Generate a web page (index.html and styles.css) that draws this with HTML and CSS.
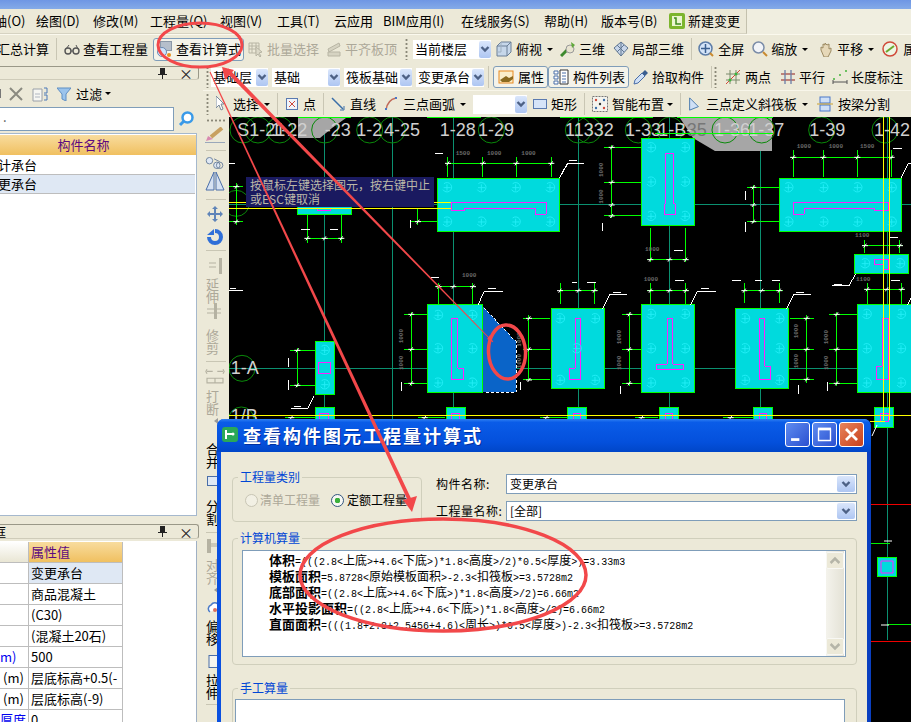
FILE: index.html
```html
<!DOCTYPE html>
<html lang="zh">
<head>
<meta charset="utf-8">
<title>查看构件图元工程量计算式</title>
<link rel="stylesheet" href="styles.css">
</head>
<body>
<svg class="defs" width="0" height="0">
  <symbol id="chev" viewBox="0 0 12 16"><path d="M2.5 6 6 9.5 9.5 6" fill="none" stroke="#4d6185" stroke-width="2.4"/></symbol>
  <g id="r" fill="none" stroke="#22eef6" stroke-width="3"><path d="M-9-11A14 14 0 1 1-12 7"/><path d="M-10 1H11M0-9V10"/></g>
  <path id="t" d="M-9 0H9M-4 6 4-6" stroke="#fff" stroke-width="3" fill="none"/>
</svg>
<div class="app">
  <div class="titlebar"></div>
  <div class="menubar">
    <nav class="menu">
      <span class="mi w42">轴(O)</span><span class="mi w57">绘图(D)</span><span class="mi w57">修改(M)</span><span class="mi w70">工程量(Q)</span><span class="mi w57">视图(V)</span><span class="mi w57">工具(T)</span><span class="mi w49">云应用</span><span class="mi w78">BIM应用(I)</span><span class="mi w83">在线服务(S)</span><span class="mi w57">帮助(H)</span><span class="mi w68">版本号(B)</span>
      <span class="mi it newc"><svg class="ic" viewBox="0 0 16 16"><rect x="0" y="0" width="16" height="16" rx="2" fill="#7cb52e"/><rect x="3" y="3" width="10" height="10" fill="#eaf5d0"/><path d="M5 5h2v6h5" stroke="#3d8a1e" stroke-width="1.5" fill="none"/></svg>新建变更</span>
    </nav>
  </div>
  <div class="tb tb1">
    <span class="txt clipl">汇总计算</span>
    <i class="sep"></i>
    <span class="it"><svg class="ic" viewBox="0 0 16 16"><circle cx="4" cy="10" r="3" fill="none" stroke="#555" stroke-width="1.4"/><circle cx="12" cy="10" r="3" fill="none" stroke="#555" stroke-width="1.4"/><path d="M7 10h2M2 8l3-4M14 8l-2-4" stroke="#555"/></svg>查看工程量</span>
    <span class="it hot"><svg class="ic" viewBox="0 0 16 16"><rect x="3" y="0" width="12" height="10" fill="#8b98a8"/><path d="M4 2h10M4 4h10M4 6h10M4 8h10" stroke="#dfe5ee"/><circle cx="5" cy="11" r="4.5" fill="#cfe4fb" stroke="#6a88b0"/><circle cx="12" cy="14" r="2" fill="#e8901c"/></svg>查看计算式</span>
    <span class="it off m4"><svg class="ic" viewBox="0 0 16 16"><path d="M1 2h10v10H1zM1 5h10M1 8h10M4 2v10M8 2v10" fill="none" stroke="#b8b5a4"/><path d="M8 6l6 5-3 1 2 3-1 1-2-3-2 2z" fill="#dcd9c8" stroke="#b8b5a4"/></svg>批量选择</span>
    <span class="it off m7"><svg class="ic" viewBox="0 0 16 16"><path d="M2 8 13 2l1 3-11 6zM2 11h12v4H2z" fill="#d6d3c2" stroke="#b8b5a4"/></svg>平齐板顶</span>
    <i class="grip g1"></i>
    <span class="sel s78">当前楼层<b class="dd"><svg viewBox="0 0 12 16"><use href="#chev"/></svg></b></span>
    <span class="it m5 g4"><svg class="ic" viewBox="0 0 16 16"><path d="M1 5 5 1h10v10l-4 4H1z" fill="#c6d7ea" stroke="#6a7f96"/><path d="M1 5h10v10M11 5l4-4" fill="none" stroke="#6a7f96"/><path d="M5 1v10H1" fill="none" stroke="#9fb0c0"/></svg>俯视</span><i class="caret"></i>
    <span class="it"><svg class="ic" viewBox="0 0 16 16"><path d="M1 15 10 6" stroke="#3d8a2e" stroke-width="3"/><circle cx="10" cy="8" r="4" fill="#e8e4d0" stroke="#999"/><path d="M11 1l4 3-3 3z" fill="#5fa83a"/></svg>三维</span>
    <span class="it m8"><svg class="ic" viewBox="0 0 16 16"><path d="M8 1l7 6-7 8-7-8z" fill="#c8d6ea" stroke="#5f7690"/><path d="M4 4l7 7M11 4 4 11M8 1v14" stroke="#5f7690" fill="none"/></svg>局部三维</span>
    <i class="sep"></i>
    <span class="it m6 g4"><svg class="ic" viewBox="0 0 16 16"><circle cx="7.500" cy="7.500" r="6.500" fill="#d4e4f8" stroke="#5d7da8" stroke-width="1.500"/><path d="M7.500 3v9M3 7.500h9" stroke="#3a5f90" stroke-width="1.500"/><path d="M12 12l3 3" stroke="#c98a30" stroke-width="2"/></svg>全屏</span>
    <span class="it m8"><svg class="ic" viewBox="0 0 16 16"><circle cx="6.500" cy="6.500" r="5.500" fill="#f2f4f8" stroke="#7a8ca8" stroke-width="1.500"/><path d="M11 11l4 4" stroke="#c98a30" stroke-width="2"/></svg>缩放</span><i class="caret"></i>
    <span class="it m10"><svg class="ic" viewBox="0 0 16 16"><path d="M3 9V6l2 1V3l2 1V2l2 2 2-1v5l2-1v3l-3 6H6z" fill="#e6d8b8" stroke="#9c8a62"/></svg>平移</span><i class="caret"></i>
    <span class="it m8 g5"><svg class="ic" viewBox="0 0 16 16"><circle cx="8" cy="8" r="7" fill="#eef5e4" stroke="#d04a3a" stroke-width="1.500"/><path d="M4 11l8-6" stroke="#6aa82e" stroke-width="2"/></svg>属性</span>
  </div>
  <main class="main">
    <aside class="left">
      <section class="panel p1">
        <header class="phead"><span></span><svg class="pin" viewBox="0 0 9 11"><path d="M2 0h5v6h2v1H5v4H4V7H0V6h2z" fill="#222"/></svg><span class="cls">×</span></header>
        <div class="filter">
          <span class="plus"></span>
          <svg class="ic x" viewBox="0 0 14 14"><path d="M1 1l12 12M13 1 1 13" stroke="#8a8a80" stroke-width="2"/></svg>
          <svg class="ic d" viewBox="0 0 16 16"><path d="M1 3h9v12H1z" fill="#f6f6f2" stroke="#9aa0a8"/><path d="M3 8h5M3 11h5" stroke="#b0b6c0"/><path d="M12 2h3v5h-3M12 9h3v5h-3" fill="none" stroke="#4a78b8"/></svg>
          <svg class="ic f" viewBox="0 0 14 14"><path d="M0 1h14L9 7v7l-4-2V7z" fill="#9cc4ec" stroke="#5f8fc4"/></svg>
          <span class="flt">过滤</span><i class="caret c4"></i>
        </div>
        <div class="search">
          <span class="sbox">.</span>
          <svg class="ic" viewBox="0 0 16 16"><circle cx="9.500" cy="6.500" r="5" fill="#fff" stroke="#3a9ae8" stroke-width="2.500"/><path d="M6 10l-4 4" stroke="#3a9ae8" stroke-width="3"/></svg>
        </div>
        <div class="list">
          <div class="lhead">构件名称</div>
          <div class="lrow"><span class="clipc">设计承台</span></div>
          <div class="lrow sel2"><span class="clipc">变更承台</span></div>
        </div>
      </section>
      <section class="panel p2">
        <header class="phead ph2"><span class="clipk">框</span><svg class="pin" viewBox="0 0 9 11"><path d="M2 0h5v6h2v1H5v4H4V7H0V6h2z" fill="#222"/></svg><span class="cls">×</span></header>
        <div class="props">
          <div class="pr phd"><span class="k"></span><span class="v">属性值</span></div>
          <div class="pr"><span class="k"></span><span class="v sel2">变更承台</span></div>
          <div class="pr"><span class="k"></span><span class="v">商品混凝土</span></div>
          <div class="pr"><span class="k"></span><span class="v">(C30)</span></div>
          <div class="pr"><span class="k"></span><span class="v">(混凝土20石)</span></div>
          <div class="pr"><span class="k blue">m)</span><span class="v">500</span></div>
          <div class="pr"><span class="k ind">(m)</span><span class="v">层底标高+0.5(-</span></div>
          <div class="pr"><span class="k ind">(m)</span><span class="v">层底标高(-9)</span></div>
          <div class="pr"><span class="k blue">厚度</span><span class="v">0</span></div>
        </div>
      </section>
    </aside>
    <div class="work">
      <div class="tb tb2">
        <i class="grip g2"></i>
        <span class="sel s56 over">基础层<b class="dd"><svg viewBox="0 0 12 16"><use href="#chev"/></svg></b></span>
        <span class="sel s68">基础<b class="dd"><svg viewBox="0 0 12 16"><use href="#chev"/></svg></b></span>
        <span class="sel s68">筏板基础<b class="dd"><svg viewBox="0 0 12 16"><use href="#chev"/></svg></b></span>
        <span class="sel s68">变更承台<b class="dd"><svg viewBox="0 0 12 16"><use href="#chev"/></svg></b></span>
        <i class="sep s4"></i>
        <span class="tog first"><svg class="ic" viewBox="0 0 16 16"><rect x="1" y="2" width="14" height="12" fill="#fbeecb" stroke="#e88a20"/><path d="M2 11l6-4 3 2 4-2v3l-4 3H4z" fill="#8a6a20"/></svg>属性</span>
        <span class="tog"><svg class="ic" viewBox="0 0 16 16"><path d="M1 2h4v3H1zM1 7h4v3H1zM1 12h4v3H1z" fill="#fff" stroke="#4a6ea8"/><path d="M7 1h8v14H7z" fill="#fff" stroke="#333"/><path d="M9 4h4M9 7h4M9 10h4M9 13h4" stroke="#4a6ea8"/></svg>构件列表</span>
        <span class="it m4"><svg class="ic" viewBox="0 0 16 16"><path d="M1 15l1-4 7-7 3 3-7 7z" fill="#cfe0f6" stroke="#4a6ea8"/><path d="M9 4l3-3 3 3-3 3" fill="#3a5f90"/></svg>拾取构件</span>
        <i class="sep"></i>
        <i class="grip g3"></i>
        <span class="it m8 g4"><svg class="ic" viewBox="0 0 16 16"><path d="M1 15 15 1" stroke="#d04a3a"/><path d="M5 1v14M11 1v14M1 5h14M1 11h14" stroke="#7a8a6a"/><circle cx="5" cy="11" r="1.500" fill="#3cb33c"/><circle cx="11" cy="5" r="1.500" fill="#3cb33c"/></svg>两点</span>
        <span class="it m9"><svg class="ic" viewBox="0 0 16 16"><path d="M1 5h14M1 11h14" stroke="#b0605a" stroke-width="1.300"/><path d="M5 1v14M11 1v14" stroke="#6a7ea8" stroke-width="1.300"/></svg>平行</span>
        <span class="it"><svg class="ic" viewBox="0 0 16 16"><path d="M1 11v4M15 11v4M1 13h14" stroke="#555"/><rect x="1" y="9" width="2" height="2" fill="#6cc060"/><rect x="7" y="5" width="2" height="2" fill="#6cc060"/><rect x="13" y="1" width="2" height="2" fill="#6cc060"/></svg>长度标注</span>
        <span class="it m8"><svg class="ic" viewBox="0 0 16 16"><path d="M1 5 6 14 15 3" fill="none" stroke="#666"/><rect x="0" y="3" width="2" height="2" fill="#6cc060"/></svg></span>
      </div>
      <div class="tb tb3">
        <i class="grip g2"></i>
        <span class="it m7 g9"><svg class="ic ptr" viewBox="0 0 8 16"><path d="M0 0v12l3-3 2 5 2-1-2-5h3z" fill="#fff" stroke="#7a8a9a"/></svg>选择</span><i class="caret"></i>
        <i class="sep"></i>
        <span class="it m8 g5 n12"><svg class="ic" viewBox="0 0 12 12"><rect x="0.500" y="0.500" width="11" height="11" fill="#f0f4fa" stroke="#5a7ab0"/><path d="M3 3l6 6M9 3 3 9" stroke="#d04a3a"/></svg>点</span>
        <i class="sep"></i>
        <span class="it m7 g5 n14"><svg class="ic" viewBox="0 0 14 14"><path d="M1 1l11 11" stroke="#3a6ea8" stroke-width="1.500"/><path d="M9 13h4V9" fill="none" stroke="#3a6ea8"/></svg>直线</span>
        <span class="it m9 g6 n12"><svg class="ic" viewBox="0 0 12 14"><path d="M1 13C2 6 6 2 11 1" fill="none" stroke="#c06a5a" stroke-width="1.500"/><rect x="0" y="11" width="2" height="2" fill="#4a78c8"/><rect x="10" y="0" width="2" height="2" fill="#4a78c8"/></svg>三点画弧</span><i class="caret"></i>
        <span class="sel s54"><b class="dd"><svg viewBox="0 0 12 16"><use href="#chev"/></svg></b></span>
        <span class="it m6 g4 n14"><svg class="ic" viewBox="0 0 14 10"><rect x="0.500" y="0.500" width="13" height="9" fill="#d6e4f8" stroke="#5a7ab0"/></svg>矩形</span>
        <i class="sep"></i>
        <span class="it m7 g4"><svg class="ic" viewBox="0 0 16 16"><rect x="0.500" y="0.500" width="15" height="15" fill="#f4f4ee" stroke="#777" stroke-dasharray="2 1"/><circle cx="4" cy="4" r="1.200" fill="#d04a3a"/><circle cx="12" cy="4" r="1.200" fill="#3a6ea8"/><circle cx="8" cy="8" r="1.200" fill="#333"/><circle cx="4" cy="12" r="1.200" fill="#3a6ea8"/><circle cx="12" cy="12" r="1.200" fill="#d04a3a"/></svg>智能布置</span><i class="caret c3"></i>
        <i class="sep"></i>
        <span class="it m7 g6 n12"><svg class="ic" viewBox="0 0 12 16"><path d="M1 1v14l10-4z" fill="#cfe0f6" stroke="#3a6ea8"/></svg>三点定义斜筏板</span><i class="caret"></i>
        <span class="it m9 g5"><svg class="ic" viewBox="0 0 16 16"><rect x="3" y="1" width="10" height="6" fill="#cfe0f6" stroke="#4a78c8"/><rect x="3" y="9" width="10" height="6" fill="#cfe0f6" stroke="#4a78c8"/><path d="M0 8h16" stroke="#c8a030"/></svg>按梁分割</span>
      </div>
      <div class="stage">
        <div class="strip">
          <i class="dots"></i>
          <svg class="tool brush" viewBox="0 0 20 16"><path d="M6 10 17 1" stroke="#c8a060" stroke-width="4"/><path d="M8 12 3 9 1 14z" fill="#d88ab0"/><path d="M0 15.500h20" stroke="#9aa8ba"/></svg>
          <i class="tsep"></i>
          <svg class="tool t11" viewBox="0 0 20 13"><circle cx="4" cy="4" r="3.500" fill="#dfe8f4" stroke="#6a7f9a"/><circle cx="12" cy="9" r="3.500" fill="#dfe8f4" stroke="#6a7f9a"/><circle cx="15" cy="9" r="3.500" fill="none" stroke="#6a7f9a"/><path d="M9 2l6 3" stroke="#6a7f9a"/></svg>
          <svg class="tool t20" viewBox="0 0 20 20"><path d="M9 1v18H1zM11 1v18h8z" fill="#d6e2f2" stroke="#4a6ea8"/></svg>
          <i class="tsep t8"></i>
          <svg class="tool t16" viewBox="0 0 16 16"><path d="M8 0l3 3H9v4h4V5l3 3-3 3V9H9v4h2l-3 3-3-3h2V9H3v2L0 8l3-3v2h4V3H5z" fill="#5f84b8"/></svg>
          <svg class="tool t16 g7" viewBox="0 0 16 16"><path d="M8 2A6 6 0 1 1 2 8" fill="none" stroke="#2f6fd8" stroke-width="4"/><path d="M0 6h7V0z" fill="#2f6fd8"/></svg>
          <i class="tsep t5"></i>
          <svg class="tool t16 g7" viewBox="0 0 16 16"><path d="M2 5h7M2 9h7" stroke="#b5b2a2"/><rect x="12" y="0" width="3" height="16" fill="#b5b2a2"/></svg>
          <span class="vt off v3">延伸</span>
          <svg class="tool t16 g0" viewBox="0 0 16 16"><path d="M0 6h14M0 10h14" stroke="#b5b2a2"/><rect x="7" y="0" width="3" height="16" fill="#b5b2a2"/></svg>
          <span class="vt off v9">修剪</span>
          <i class="tsep"></i>
          <svg class="tool t16" viewBox="0 0 16 14"><path d="M1 3h5M10 3h5M1 1 0 3l1 2M15 1l1 2-1 2" stroke="#b5b2a2" fill="none"/><path d="M1 9h14v4H1zM8 9v4" fill="none" stroke="#b5b2a2"/></svg>
          <span class="vt off v5">打断</span>
          <span class="tri"></span>
          <span class="vt v18">合并</span>
          <svg class="tool t10" viewBox="0 0 16 10"><rect x="0.500" y="0.500" width="15" height="9" fill="#dfe8f4" stroke="#4a6ea8"/></svg>
          <span class="vt v13">分割</span>
          <i class="tsep"></i>
          <svg class="tool t16" viewBox="0 0 16 16"><rect x="0" y="0" width="4" height="14" fill="#b5b2a2"/><rect x="4" y="4" width="8" height="4" fill="#ccc9b8"/></svg>
          <span class="vt off v3">对齐</span>
          <span class="tri"></span>
          <svg class="tool t11 g9b" viewBox="0 0 14 12"><path d="M2 10a4 4 0 0 1 1-7 5 5 0 0 1 9 2" fill="#fff" stroke="#4a7ac8" stroke-width="1.500"/><circle cx="7" cy="8" r="2" fill="#d87060"/></svg>
          <span class="vt v5">偏移</span>
          <svg class="tool t13" viewBox="0 0 13 13"><rect x="0.500" y="0.500" width="12" height="12" fill="#f4f4ee" stroke="#4a6ea8"/></svg>
          <span class="vt v5">拉伸</span>
          <i class="tsep t5"></i>
        </div>
        <div class="canvas">
          <svg class="cad" viewBox="229 117 682 605" width="682" height="605">
            <rect x="229" y="117" width="682" height="605" fill="#000"/>
            <g stroke="#0b9070" fill="none">
              <path d="M324.500 117V420M392.500 117V420M453.500 117V420M578.500 117V420M669.500 117V420M760.500 117V420M887.500 117V640M229 204.500H911M229 368.500H911"/>
            </g>
            <g fill="#a6a6a6"><path d="M298 118h48l-14 10-12 10h-22zM680 118h92v33h-57l-22-13z"/></g>
            <path d="M871 504.500H911M871 641.500H911" stroke="#f00000"/>
            <path d="M871 543.500H890M887 624.500H911" stroke="#00f000"/>
            <g transform="translate(228 115) scale(.33333)" shape-rendering="crispEdges">
              <g fill="none" stroke="#0a8a0a" stroke-width="3" shape-rendering="auto">
                <circle cx="45" cy="45" r="39"/><circle cx="90" cy="45" r="39"/><circle cx="155" cy="45" r="39"/><circle cx="290" cy="45" r="39"/><circle cx="425" cy="45" r="39"/><circle cx="493" cy="45" r="39"/><circle cx="790" cy="45" r="39"/><circle cx="42" cy="760" r="39"/><circle cx="40" cy="915" r="39"/><circle cx="25" cy="265" r="39"/>
              </g>
              <g fill="#d0d0d0" font-family="Liberation Sans" font-size="54">
                <text x="28" y="62">S1-21</text><text x="130" y="62">1-22</text><text x="290" y="62">-23</text><text x="385" y="62">1-2</text><text x="468" y="62">4-25</text><text x="635" y="62">1-28</text><text x="750" y="62">1-29</text><text x="8" y="778">1-A</text><text x="8" y="920">1/B</text>
              </g>
              <g fill="#00dadd" stroke="#00ff00" stroke-width="3">
                <rect x="630" y="190" width="365" height="160"/><rect x="210" y="270" width="162" height="29"/><rect x="600" y="570" width="165" height="262"/><rect x="262" y="680" width="58" height="158"/><rect x="262" y="878" width="58" height="60"/><rect x="655" y="878" width="58" height="60"/>
              </g>
              <path d="M765 575 865 680V832H765Z" fill="#0a64c8"/>
              <path d="M767 578 865 680V832H772" fill="none" stroke="#fff" stroke-width="3" stroke-dasharray="9 6"/>
              <g stroke="#00ff00" stroke-width="3" fill="none">
                <path d="M650 145H975M660 125V185M765 125V185M865 125V185M970 125V185M238 298V385M340 298V385M230 370H345M0 215H45M0 320H45M25 205V330M550 320H630M570 280V330M620 515H745M632 505V568M735 505V568M550 590V812M528 598H600M528 703H600M528 805H600M208 700V815M187 706H260M187 811H260M170 908H260M570 908H650M935 908H1020M903 600V795M885 610H966M885 703H966M885 795H966M210 8H370M598 8H760"/>
              </g>
              <g stroke="#fff" stroke-width="3" fill="none">
                <path d="M620 117H645M0 145H20M220 343H245M305 343H330M608 488H632M0 528H45M5 520H25M522 800V827M750 570 768 530H825M780 520H805M995 188 1020 145M182 730V755M182 795V825M258 842 240 880H190M198 875H218M878 800V825M548 315V340"/>
              </g>
              <g stroke="#ff20ff" stroke-width="3" fill="none">
                <path d="M670 262H955V298H922V280H710V286H670ZM270 280V287H308V280M670 610H690V760H707V794H670Z"/><rect x="271" y="743" width="37" height="33"/><rect x="276" y="895" width="26" height="20"/><rect x="670" y="895" width="26" height="20"/>
              </g>
              <g shape-rendering="auto">
                <use href="#r" x="657" y="217"/><use href="#r" x="760" y="217"/><use href="#r" x="863" y="217"/><use href="#r" x="966" y="217"/><use href="#r" x="657" y="320"/><use href="#r" x="760" y="320"/><use href="#r" x="863" y="320"/><use href="#r" x="966" y="320"/><use href="#r" x="630" y="600"/><use href="#r" x="733" y="600"/><use href="#r" x="630" y="700"/><use href="#r" x="733" y="700"/><use href="#r" x="630" y="803"/><use href="#r" x="733" y="803"/><use href="#r" x="290" y="705"/><use href="#r" x="290" y="808"/>
                <use href="#t" x="660" y="145"/><use href="#t" x="765" y="145"/><use href="#t" x="865" y="145"/><use href="#t" x="970" y="145"/><use href="#t" x="238" y="370"/><use href="#t" x="290" y="370"/><use href="#t" x="340" y="370"/><use href="#t" x="632" y="515"/><use href="#t" x="676" y="515"/><use href="#t" x="735" y="515"/><use href="#t" x="550" y="598"/><use href="#t" x="550" y="703"/><use href="#t" x="550" y="805"/><use href="#t" x="208" y="706"/><use href="#t" x="208" y="811"/><use href="#t" x="903" y="610"/><use href="#t" x="903" y="703"/><use href="#t" x="903" y="795"/><use href="#t" x="570" y="320"/><use href="#t" x="25" y="215"/><use href="#t" x="25" y="320"/><use href="#t" x="190" y="908"/><use href="#t" x="590" y="908"/><use href="#t" x="955" y="908"/>
              </g>
              <g class="dimt" shape-rendering="auto">
                <text x="683" y="119">1500</text><text x="777" y="119">1000</text><text x="880" y="119">1000</text><text x="702" y="487">1000</text>
                <text transform="translate(524 685) rotate(-90)">1000</text><text transform="translate(524 765) rotate(-90)">1000</text><text transform="translate(878 695) rotate(-90)">1000</text><text transform="translate(878 760) rotate(-90)">1000</text>
              </g>
            </g>
            <g transform="translate(560 115) scale(.33333)" shape-rendering="crispEdges">
              <g fill="none" stroke="#0a8a0a" stroke-width="3" shape-rendering="auto">
                <circle cx="55" cy="45" r="39"/><circle cx="85" cy="45" r="39"/><circle cx="235" cy="45" r="39"/><circle cx="330" cy="45" r="39"/><circle cx="495" cy="45" r="39"/><circle cx="605" cy="45" r="39"/><circle cx="785" cy="45" r="39"/><circle cx="975" cy="45" r="39"/>
              </g>
              <g fill="#d0d0d0" font-family="Liberation Sans" font-size="54">
                <text x="15" y="62">11332</text><text x="195" y="62">1-33</text><text x="295" y="62">1-B-</text><text x="380" y="62" fill="#777">35</text><text x="462" y="62">1-36</text><text x="565" y="62">1-37</text><text x="748" y="62">1-39</text><text x="942" y="62">1-42</text>
              </g>
              <g fill="#00dadd" stroke="#00ff00" stroke-width="3">
                <rect x="244" y="70" width="160" height="262"/><rect x="658" y="190" width="367" height="160"/><rect x="885" y="418" width="162" height="58"/><rect x="-26" y="582" width="160" height="238"/><rect x="244" y="570" width="160" height="262"/><rect x="526" y="582" width="160" height="238"/><rect x="892" y="570" width="180" height="262"/><rect x="22" y="877" width="58" height="60"/><rect x="298" y="877" width="58" height="60"/><rect x="580" y="877" width="58" height="60"/><rect x="944" y="877" width="58" height="60"/>
              </g>
              <g stroke="#00ff00" stroke-width="3" fill="none">
                <path d="M0 8H280M350 8H640M285 55H640M155 90V310M133 97H244M133 202H244M133 303H244M271 340V440M377 340V440M262 434H385M262 527H388M271 505V568M377 505V568M208 590V812M187 598H244M187 703H244M187 805H244M580 210V325M562 217H658M562 320H658M690 127H1000M700 105V185M790 105V185M892 105V185M995 105V185M905 392H1030M915 375V415M1020 375V415M830 590V812M808 598H892M808 703H892M808 805H892M912 523H1035M922 505V566M1025 505V566M740 600V805M690 610H762M690 703H762M690 793H762M545 527H670M553 505V565M658 505V565M0 527H115M0 505V568M103 505V568M225 908H295M490 908H578"/>
              </g>
              <g stroke="#fff" stroke-width="3" fill="none">
                <path d="M127 325V347M0 185 22 145H72M27 138H50M342 408H368M345 498H372M392 570 412 530H468M423 520H447M181 812V838M556 228V255M556 322V350M1022 190 1045 145H1053M1000 100H1025M990 367H1015M887 476 867 513H815M822 508H845M802 802V828M993 498H1020M1043 570 1053 550M715 810V836M516 498H543M585 498H605M635 498H660M680 582 702 538H752M708 532H733M128 582 150 538H200M158 532H182M35 502H50M80 502H107"/>
              </g>
              <g stroke="#ff20ff" stroke-width="3" fill="none">
                <path d="M318 115H340V264L347 268V298H313V268L318 264ZM322 610H338V748H371V764H289V748H322ZM700 262H985V288H945V280H733V298H700ZM943 433H985V465H970V448H943ZM967 610H986V794H949V754H967ZM598 610H614V754H632V794H598ZM46 610H62V794H28V760H46Z"/>
                <rect x="40" y="895" width="22" height="20"/><rect x="317" y="895" width="22" height="20"/><rect x="598" y="895" width="22" height="20"/><rect x="961" y="895" width="24" height="24"/>
              </g>
              <g shape-rendering="auto">
                <use href="#r" x="273" y="97"/><use href="#r" x="375" y="97"/><use href="#r" x="273" y="200"/><use href="#r" x="375" y="200"/><use href="#r" x="273" y="303"/><use href="#r" x="375" y="303"/>
                <use href="#r" x="685" y="217"/><use href="#r" x="790" y="217"/><use href="#r" x="892" y="217"/><use href="#r" x="995" y="217"/><use href="#r" x="685" y="320"/><use href="#r" x="790" y="320"/><use href="#r" x="892" y="320"/><use href="#r" x="995" y="320"/>
                <use href="#r" x="915" y="445"/><use href="#r" x="1020" y="445"/>
                <use href="#r" x="0" y="610"/><use href="#r" x="105" y="610"/><use href="#r" x="50" y="700"/><use href="#r" x="0" y="795"/><use href="#r" x="105" y="795"/>
                <use href="#r" x="273" y="597"/><use href="#r" x="375" y="597"/><use href="#r" x="273" y="700"/><use href="#r" x="375" y="700"/><use href="#r" x="273" y="803"/><use href="#r" x="375" y="803"/>
                <use href="#r" x="555" y="610"/><use href="#r" x="658" y="610"/><use href="#r" x="555" y="700"/><use href="#r" x="658" y="700"/><use href="#r" x="555" y="795"/><use href="#r" x="658" y="795"/>
                <use href="#r" x="920" y="597"/><use href="#r" x="1023" y="597"/><use href="#r" x="920" y="700"/><use href="#r" x="1023" y="700"/><use href="#r" x="920" y="803"/><use href="#r" x="1023" y="803"/>
                <use href="#t" x="155" y="97"/><use href="#t" x="155" y="202"/><use href="#t" x="155" y="270"/><use href="#t" x="155" y="303"/><use href="#t" x="271" y="434"/><use href="#t" x="328" y="434"/><use href="#t" x="377" y="434"/><use href="#t" x="271" y="527"/><use href="#t" x="328" y="527"/><use href="#t" x="377" y="527"/><use href="#t" x="208" y="598"/><use href="#t" x="208" y="703"/><use href="#t" x="208" y="805"/><use href="#t" x="580" y="217"/><use href="#t" x="580" y="270"/><use href="#t" x="580" y="320"/><use href="#t" x="700" y="127"/><use href="#t" x="790" y="127"/><use href="#t" x="892" y="127"/><use href="#t" x="995" y="127"/><use href="#t" x="915" y="392"/><use href="#t" x="1020" y="392"/><use href="#t" x="830" y="598"/><use href="#t" x="830" y="703"/><use href="#t" x="830" y="805"/><use href="#t" x="922" y="523"/><use href="#t" x="980" y="523"/><use href="#t" x="1025" y="523"/><use href="#t" x="740" y="610"/><use href="#t" x="740" y="703"/><use href="#t" x="740" y="793"/><use href="#t" x="553" y="527"/><use href="#t" x="605" y="527"/><use href="#t" x="658" y="527"/><use href="#t" x="0" y="527"/><use href="#t" x="55" y="527"/><use href="#t" x="103" y="527"/><use href="#t" x="245" y="908"/><use href="#t" x="512" y="908"/>
              </g>
              <g class="dimt" shape-rendering="auto">
                <text x="710" y="99">1000</text><text x="806" y="99">1000</text><text x="900" y="99">1500</text><text x="255" y="408">1000</text><text x="251" y="499">1000</text><text x="885" y="366">1100</text><text x="888" y="498">1100</text>
                <text transform="translate(128 186) rotate(-90)">1000</text><text transform="translate(128 266) rotate(-90)">1000</text><text transform="translate(182 688) rotate(-90)">1000</text><text transform="translate(182 765) rotate(-90)">1000</text><text transform="translate(714 670) rotate(-90)">1000</text><text transform="translate(714 760) rotate(-90)">1000</text><text transform="translate(803 688) rotate(-90)">1000</text><text transform="translate(803 765) rotate(-90)">1000</text>
              </g>
            </g>
            <g stroke="#ffff00" fill="none">
              <path d="M229 202.500H451M229 208.500H451M229 415.500H911M883.500 117V420M889.500 117V420M870 421.500H885"/>
            </g>
            <rect x="877.500" y="557.500" width="19" height="19" fill="#00dadd" stroke="#00ff00"/>
            <path d="M881 561h12v12h-12z" fill="none" stroke="#ff20ff"/>
            <path d="M872 436 877 425M884 541H892M881 625H889" stroke="#fff" fill="none"/>
          </svg>
          <div class="tip">按鼠标左键选择图元，按右键中止<br>或ESC键取消</div>
        </div>
      </div>
    </div>
  </main>
  <section class="dialog">
    <header class="dlgbar">
      <svg class="dlgicon" viewBox="0 0 16 15"><rect width="16" height="15" rx="3" fill="#2aa858"/><path d="M4 3v9M4 7h7" stroke="#fff" stroke-width="2"/><circle cx="11" cy="7" r="1.500" fill="#fff"/></svg>
      <h1 class="dlgtitle">查看构件图元工程量计算式</h1>
      <span class="wbtn"><svg viewBox="0 0 24 25"><path d="M5 18h9" stroke="#fff" stroke-width="3"/></svg></span>
      <span class="wbtn"><svg viewBox="0 0 24 25"><path d="M5 6.500h14M5.500 6v13h13V6" fill="none" stroke="#fff" stroke-width="1.500"/><path d="M5 6.500h14" stroke="#fff" stroke-width="3"/></svg></span>
      <span class="wbtn close"><svg viewBox="0 0 24 25"><path d="M6 6.500l12 12M18 6.500l-12 12" stroke="#fff" stroke-width="3"/></svg></span>
    </header>
    <div class="dlgbody">
      <div class="row1">
        <fieldset class="grp kind">
          <legend>工程量类别</legend>
          <div class="radios">
            <span class="rad dis"><i class="dot"></i>清单工程量</span>
            <span class="rad"><i class="dot on"></i>定额工程量</span>
          </div>
        </fieldset>
        <div class="form">
          <label class="fr"><span class="fl">构件名称:</span><span class="combo">变更承台<b class="dd dd2"><svg viewBox="0 0 12 16"><use href="#chev"/></svg></b></span></label>
          <label class="fr"><span class="fl">工程量名称:</span><span class="combo">[全部]<b class="dd dd2"><svg viewBox="0 0 12 16"><use href="#chev"/></svg></b></span></label>
        </div>
      </div>
      <fieldset class="grp calc">
        <legend>计算机算量</legend>
        <div class="calcbox">
          <div class="lines">
            <p class="ln"><b>体积</b><i>=(((2.8&lt;</i>上底<i>&gt;+4.6&lt;</i>下底<i>&gt;)*1.8&lt;</i>高度<i>&gt;/2)*0.5&lt;</i>厚度<i>&gt;)=3.33m3</i></p>
            <p class="ln"><b>模板面积</b><i>=5.8728&lt;</i>原始模板面积<i>&gt;-2.3&lt;</i>扣筏板<i>&gt;=3.5728m2</i></p>
            <p class="ln"><b>底部面积</b><i>=((2.8&lt;</i>上底<i>&gt;+4.6&lt;</i>下底<i>&gt;)*1.8&lt;</i>高度<i>&gt;/2)=6.66m2</i></p>
            <p class="ln"><b>水平投影面积</b><i>=((2.8&lt;</i>上底<i>&gt;+4.6&lt;</i>下底<i>&gt;)*1.8&lt;</i>高度<i>&gt;/2)=6.66m2</i></p>
            <p class="ln"><b>直面面积</b><i>=(((1.8+2.8+2.5456+4.6)&lt;</i>周长<i>&gt;)*0.5&lt;</i>厚度<i>&gt;)-2.3&lt;</i>扣筏板<i>&gt;=3.5728m2</i></p>
          </div>
          <div class="vbar">
            <b class="vb"><svg viewBox="0 0 12 12"><path d="M2.500 8 6 4.500 9.500 8" fill="none" stroke="#b5b5a8" stroke-width="2"/></svg></b>
            <b class="vb"><svg viewBox="0 0 12 12"><path d="M2.500 4 6 7.500 9.500 4" fill="none" stroke="#b5b5a8" stroke-width="2"/></svg></b>
          </div>
        </div>
      </fieldset>
      <fieldset class="grp manual">
        <legend>手工算量</legend>
        <div class="manbox"></div>
      </fieldset>
    </div>
  </section>
  <svg class="marks" viewBox="0 0 911 722" width="911" height="722">
    <g fill="#f2484a">
      <path d="M228.400 68.600 225.600 71.400 492.700 342.300 493.300 341.700Z"/>
      <path d="M222 67 234 70 225 80ZM493 342 487 339 490 335Z"/>
      <path d="M210.500 71.800 209.500 72.200 410.200 505.800 413.800 504.200Z"/>
      <path d="M412 512 403 500 417 496Z"/>
    </g>
    <g fill="none" stroke="#f2484a">
      <ellipse cx="200" cy="45" rx="42" ry="22" stroke-width="3"/>
      <ellipse cx="507" cy="352" rx="18.500" ry="27" stroke-width="3.500" transform="rotate(-3 507 352)"/>
      <ellipse cx="443" cy="575" rx="143" ry="56" stroke-width="3.500"/>
    </g>
  </svg>
</div>
</body>
</html>
```
FILE: styles.css
```css
* { box-sizing: border-box; }
html, body { margin: 0; height: 722px; overflow: hidden; }
body { font: 13px/16px "Noto Sans CJK SC", sans-serif; color: #000; background: #ece9d8; }
i, b { font-style: normal; font-weight: normal; }
.defs { position: absolute; }
.app { position: relative; width: 911px; height: 722px; overflow: hidden; display: flex; flex-direction: column; }

.titlebar { height: 9px; background: linear-gradient(#6e96e4, #84aae8); }
.menubar { height: 26px; background: #f0eee0; flex: none; border-bottom: 1px solid #fbf9ee; }
.menu { width: 747px; height: 25px; display: flex; align-items: center; background: #ece9d8; border-right: 1px solid #c4c1ae; border-bottom: 1px solid #d6d3c2; padding-left: 0; margin-left: -6px; width: 753px; overflow: hidden; }
.mi { white-space: nowrap; flex: none; }
.w42 { width: 42px; } .w49 { width: 49px; } .w57 { width: 57px; } .w68 { width: 68px; } .w70 { width: 70px; } .w78 { width: 78px; } .w83 { width: 83px; }
.mi.newc { margin-left: 0; }

.tb { display: flex; align-items: center; white-space: nowrap; flex: none; overflow: hidden; }
.tb1 { height: 28px; }
.tb2 { height: 27px; padding-left: 3px; margin-top: 1px; border-bottom: 1px solid #f8f6ea; }
.tb3 { height: 26px; padding-left: 3px; }
.it { display: flex; align-items: center; gap: 3px; margin-left: 7px; flex: none; }
.ic { width: 16px; height: 16px; flex: none; display: block; }
.n12 .ic { width: 12px; height: 14px; }
.n14 .ic { width: 14px; height: 14px; }
.ptr { width: 8px !important; }
.m4 { margin-left: 4px; } .m5 { margin-left: 5px; } .m6 { margin-left: 6px; } .m7 { margin-left: 7px; }
.m8 { margin-left: 8px; } .m9 { margin-left: 9px; } .m10 { margin-left: 10px; }
.g4 { gap: 4px; } .g5 { gap: 5px; } .g6 { gap: 6px; } .g9 { gap: 9px; }
.txt.clipl { margin-left: -3px; }
.hot { height: 23px; margin-left: 5px; padding: 0 2px 0 3px; background: #f4f3ea; border: 1px solid #7f9db9; border-radius: 3px; }
.off { color: #aca899; }
.sep { width: 1px; height: 22px; margin-left: 7px; background: #c9c6b4; flex: none; }
.sep.s4 { margin-left: 4px; }
.grip { width: 3px; height: 22px; margin-left: 8px; flex: none; background: radial-gradient(circle, #8a8878 1px, transparent 1.2px) 0 0 / 3px 4px; }
.grip.g1 { margin-left: 8px; }
.grip.g2 { margin-left: 0; }
.grip.g3 { margin-left: 2px; }
.caret { width: 0; height: 0; margin-left: 5px; border: 3px solid transparent; border-top: 3px solid #000; border-bottom: 0; flex: none; }
.caret.c3 { margin-left: 3px; }
.caret.c4 { margin-left: 3px; }

.sel { position: relative; display: flex; align-items: center; height: 19px; background: #fff; padding-left: 2px; margin-left: 4px; flex: none; }
.s78 { width: 78px; margin-left: 5px; }
.s56 { width: 57px; margin-left: 2px; }
.s68 { width: 68px; }
.s54 { width: 54px; margin-left: 7px; }
.dd { position: absolute; right: 0; top: 1px; width: 12px; height: 17px; background: linear-gradient(#dae6fb, #aec6f2); border-radius: 2px; display: block; }
.dd svg { display: block; width: 12px; height: 16px; }
.dd2 { right: 1px; top: 1px; width: 18px; height: 16px; }
.dd2 svg { width: 18px; }

.tog { display: flex; align-items: center; gap: 4px; height: 22px; padding: 0 3px 0 4px; background: #f4f3ea; border: 1px solid #7f9db9; border-radius: 3px; margin-left: 0; flex: none; }
.tog.first { margin-left: 4px; }
.tog .ic { width: 16px; }

.main { display: flex; flex: 1; min-height: 0; }
.left { width: 203px; flex: none; display: flex; flex-direction: column; }
.panel { width: 199px; }
.p1 { height: 452px; background: #ece9d8; }
.p2 { margin-top: 9px; flex: 1; }
.phead { height: 14px; margin-top: 3px; display: flex; align-items: center; justify-content: flex-end; gap: 12px; padding-right: 5px; border-bottom: 1px solid #cfccba; background: #ece9d8; border-radius: 0 3px 3px 0; border-right: 1px solid #9a9888; border-top: 1px solid #9a9888; }
.ph2 { margin-top: 0; position: relative; height: 15px; }
.clipk { position: absolute; left: -7px; }
.pin { width: 9px; height: 11px; }
.cls { font-size: 14px; line-height: 12px; color: #222; }
.filter { height: 27px; display: flex; align-items: center; position: relative; }
.x { width: 14px; height: 14px; margin-left: 8px; }
.d { margin-left: 9px; }
.f { width: 14px; height: 14px; margin-left: 9px; }
.flt { margin-left: 5px; }
.plus { width: 1px; height: 9px; background: #777; }
.search { display: flex; align-items: center; gap: 4px; height: 23px; margin-right: 5px; }
.sbox { width: 174px; height: 24px; background: #fff; border: 1px solid #7f9db9; border-left: 0; padding-left: 3px; line-height: 18px; color: #555; }
.list { margin-top: 3px; height: 383px; width: 197px; background: #fff; border: 1px solid #a5b8cd; border-left: 0; padding-top: 1px; }
.lhead { height: 20px; margin-bottom: 1px; background: linear-gradient(#f8dc9e, #f0c060); color: #5c0a80; text-align: center; line-height: 19px; padding-right: 29px; }
.lrow { height: 19px; border-bottom: 1px solid #bdbdbd; line-height: 18px; overflow: hidden; margin-right: 1px; }
.clipc { display: block; margin-left: -15px; }
.sel2 { background: #dfe8f4; }
.props { height: 185px; margin-top: 2px; background: #fff; width: 197px; padding-top: 1px; border-right: 1px solid #9fb0c4; }
.pr { display: grid; grid-template-columns: 29px 94px; height: 21px; line-height: 19px; }
.k, .v { border-bottom: 1px solid #bdbdbd; border-right: 1px solid #bdbdbd; white-space: nowrap; overflow: hidden; }
.v { padding-left: 2px; }
.phd .k { background: linear-gradient(#fff, #e9e6d4); }
.phd .v { background: linear-gradient(#f8dc9e, #f0c060); color: #5c0a80; }
.blue { color: #0000f0; }
.ind { padding-left: 3px; }

.work { flex: 1; min-width: 0; display: flex; flex-direction: column; }
.stage { flex: 1; min-height: 0; display: flex; }
.strip { width: 26px; flex: none; display: flex; flex-direction: column; align-items: center; padding-top: 2px; overflow: hidden; }
.dots { width: 20px; height: 3px; flex: none; background: radial-gradient(circle, #8a8878 1px, transparent 1.2px) 0 0 / 4px 3px; margin-bottom: 5px; }
.tool { flex: none; display: block; width: 20px; margin-left: -2px; }
.brush { height: 16px; }
.t11 { height: 12px; margin-top: 6px; }
.t20 { height: 20px; margin-top: 2px; }
.t16 { height: 16px; margin-top: 6px; }
.t10 { height: 10px; margin-top: 8px; }
.t13 { height: 13px; margin-top: 10px; }
.t16.g7 { margin-top: 7px; }
.t16.g0 { margin-top: 0; }
.t11.g9b { margin-top: 9px; }
.tsep { width: 20px; height: 1px; margin-top: 7px; background: #c9c6b4; flex: none; }
.tsep.t8 { margin-top: 8px; }
.tsep.t5 { margin-top: 5px; }
.vt { width: 13px; line-height: 13px; white-space: normal; text-align: center; margin-left: -7px; flex: none; }
.v3 { margin-top: 3px; } .v5 { margin-top: 5px; } .v9 { margin-top: 9px; } .v13 { margin-top: 13px; } .v18 { margin-top: 18px; }
.tri { width: 0; height: 0; margin-top: 3px; border: 3px solid transparent; border-left: 0; border-right: 4px solid #999; flex: none; }
.canvas { position: relative; width: 682px; height: 605px; flex: none; }
.cad { display: block; }
.tip { position: absolute; left: 17px; top: 60px; width: 188px; height: 30px; background: #1a1a60; color: #bcb8a8; font-size: 12px; line-height: 14px; padding: 1px 0 0 4px; }

.dialog { position: absolute; left: 217px; top: 419px; width: 654px; height: 303px; background: #ece9d8; border: solid #0a46d8; border-width: 0 4px; border-radius: 7px 7px 0 0; border-right-color: #0a3fc0; border-left-color: #0a50e0; }
.dlgbar { height: 33px; margin: 0 -4px; padding: 0 7px 2px 5px; display: flex; align-items: center; background: linear-gradient(#2f80f2 0, #0a5ce8 10%, #0450dc 70%, #0046c8 100%); border-radius: 7px 7px 0 0; }
.dlgicon { width: 16px; height: 15px; margin-right: 5px; flex: none; }
.dlgtitle { margin: 0; flex: 1; color: #fff; font-size: 18px; line-height: 24px; font-weight: 700; letter-spacing: 2px; text-shadow: 1px 1px 0 #0030a0; white-space: nowrap; }
.wbtn { width: 25px; height: 25px; margin-left: 2px; border: 1px solid #fff; border-radius: 3px; background: linear-gradient(135deg, #5f8cf0, #2a50d0); flex: none; }
.wbtn svg { display: block; width: 23px; height: 23px; }
.close { background: linear-gradient(135deg, #e8845c, #c8401c); }
.dlgbody { padding: 17px 10px 0 11px; }
.row1 { display: flex; height: 53px; }
.grp { margin: 0; min-width: 0; border: 1px solid #d0cfbc; border-radius: 4px; padding: 0; }
.grp legend { margin-left: 5px; padding: 0 2px; font-size: 12px; line-height: 16px; color: #0046d5; }
.kind { width: 190px; height: 53px; }
.radios { display: flex; align-items: center; padding: 7px 0 0 12px; font-size: 12px; }
.rad { display: flex; align-items: center; gap: 2px; margin-right: 11px; white-space: nowrap; }
.rad:last-child { gap: 3px; margin-right: 0; }
.rad.dis { color: #aca899; }
.dot { width: 13px; height: 13px; border-radius: 50%; border: 1px solid #c8c5b4; background: #f2f0e4; flex: none; }
.dot.on { border-color: #33567f; background: radial-gradient(circle, #3cb03c 2.6px, #f8f8f4 3px); }
.form { margin: 5px 0 0 14px; flex: 1; }
.fr { display: flex; align-items: center; height: 20px; margin-bottom: 7px; }
.fl { width: 70px; flex: none; white-space: nowrap; font-size: 12px; letter-spacing: .5px; }
.combo { position: relative; flex: 1; height: 20px; background: #fff; border: 1px solid #7f9db9; padding-left: 3px; line-height: 18px; font-size: 12px; }
.calc { margin-top: 8px; height: 135px; }
.calcbox { display: flex; height: 107px; margin: 4px 10px 0 9px; background: #fff; border: 1px solid #7f9db9; }
.lines { flex: 1; padding: 1px 0 0 26px; font-size: 12px; overflow: hidden; }
.ln { margin: 0; height: 16px; line-height: 16px; white-space: nowrap; }
.ln b { font-weight: 700; font-size: 13px; }
.ln i { font-family: "Liberation Mono", monospace; font-size: 10px; }
.vbar { width: 18px; margin-right: 1px; display: flex; flex-direction: column; justify-content: space-between; background: linear-gradient(90deg, #f4f3ec, #e4e2d6); padding: 1px 0; }
.vb { height: 17px; background: #ece9d8; border: 1px solid #f8f8f4; border-radius: 2px; display: block; }
.vb svg { display: block; width: 100%; height: 15px; }
.manual { margin-top: 15px; height: 60px; }
.manbox { height: 40px; margin: 3px 11px 0 2px; background: #fff; border: 1px solid #7f9db9; }

.marks { position: absolute; left: 0; top: 0; pointer-events: none; }
.dimt { font: 700 18px "Liberation Mono", monospace; fill: #6a6a6a; }
```
